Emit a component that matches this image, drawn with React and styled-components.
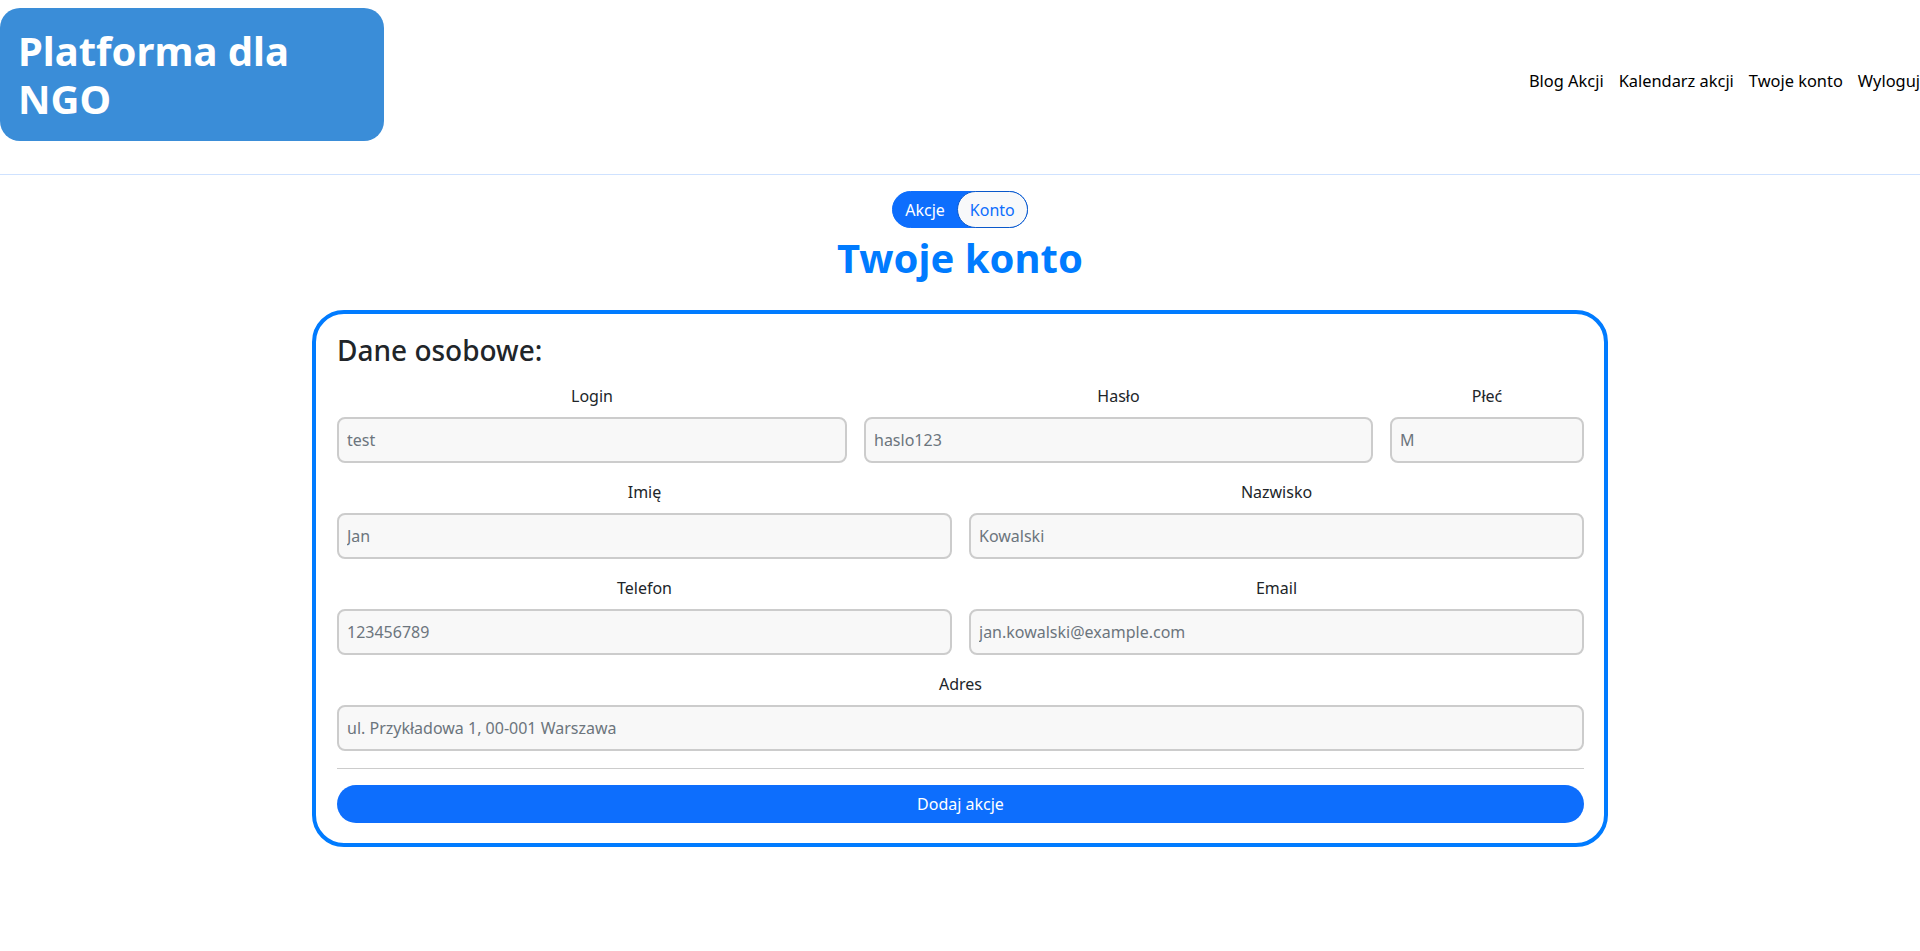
import React from "react";
import styled, { createGlobalStyle } from "styled-components";

const GlobalStyle = createGlobalStyle`
  * { box-sizing: border-box; }
  body {
    margin: 0;
    background: #fff;
    font-family: "Noto Sans", "Open Sans", sans-serif;
    font-size: 16px;
    line-height: 1.5;
    color: #212529;
    overflow-x: hidden;
  }
`;

const rows = [
  {
    cols: "510fr 509fr 194fr",
    fields: [
      { label: "Login", value: "test" },
      { label: "Hasło", value: "haslo123" },
      { label: "Płeć", value: "M" },
    ],
  },
  {
    cols: "1fr 1fr",
    fields: [
      { label: "Imię", value: "Jan" },
      { label: "Nazwisko", value: "Kowalski" },
    ],
  },
  {
    cols: "1fr 1fr",
    fields: [
      { label: "Telefon", value: "123456789" },
      { label: "Email", value: "jan.kowalski@example.com" },
    ],
  },
  {
    cols: "1fr",
    fields: [{ label: "Adres", value: "ul. Przykładowa 1, 00-001 Warszawa" }],
  },
];

const App = () => {
  return (
    <>
      <GlobalStyle />
      <Header>
        <Logo>Platforma dla NGO</Logo>
        <Nav>
          <NavLink href="#">Blog Akcji</NavLink>
          <NavLink href="#">Kalendarz akcji</NavLink>
          <NavLink href="#">Twoje konto</NavLink>
          <NavLink href="#">Wyloguj</NavLink>
        </Nav>
      </Header>
      <Main>
        <Toggle>
          <ToggleButton>Akcje</ToggleButton>
          <ToggleButton $selected>Konto</ToggleButton>
        </Toggle>
        <Title>Twoje konto</Title>
        <Card>
          <CardTitle>Dane osobowe:</CardTitle>
          {rows.map((row, i) => (
            <Row key={i} $cols={row.cols}>
              {row.fields.map((f) => (
                <Field key={f.label}>
                  <Label>{f.label}</Label>
                  <Input placeholder={f.value} />
                </Field>
              ))}
            </Row>
          ))}
          <Divider />
          <SubmitButton>Dodaj akcje</SubmitButton>
        </Card>
      </Main>
    </>
  );
};

const Header = styled.header`
  display: flex;
  align-items: center;
  justify-content: space-between;
  padding: 8px 0 33px;
  border-bottom: 1px solid #cfe2ff;
`;

const Logo = styled.div`
  width: 20%;
  padding: 19px 20px 18px 18px;
  background: #3a8dd8;
  color: #fff;
  border-radius: 20px;
  font-size: 40px;
  font-weight: 700;
  line-height: 48px;
`;

const Nav = styled.nav`
  display: flex;
  gap: 15px;
  padding-top: 13px;
`;

const NavLink = styled.a`
  color: #000;
  text-decoration: none;
  font-size: 16.4px;
`;

const Main = styled.main`
  width: 1296px;
  margin: 0 auto;
  padding-top: 16px;
  display: flex;
  flex-direction: column;
  align-items: center;
`;

const Toggle = styled.div`
  display: flex;
  height: 37px;
  background: #0d6efd;
  border: 1px solid #0d6efd;
  border-radius: 999px;
`;

const ToggleButton = styled.button`
  padding: 0 12px;
  border: ${(p) => (p.$selected ? "1px solid #0a58ca" : "none")};
  border-radius: 999px;
  background: ${(p) => (p.$selected ? "#f8f9fa" : "#0d6efd")};
  color: ${(p) => (p.$selected ? "#0d6efd" : "#fff")};
  font-family: inherit;
  font-size: 16px;
  margin: ${(p) => (p.$selected ? "-1px -1px -1px 0" : "0")};
  height: ${(p) => (p.$selected ? "37px" : "35px")};
`;

const Title = styled.h1`
  margin: 6px 0 28px;
  font-size: 40px;
  line-height: 48px;
  font-weight: 700;
  color: #007bff;
`;

const Card = styled.section`
  align-self: stretch;
  border: 4px solid #007bff;
  border-radius: 32px;
  padding: 20px 20px 20px 21px;
  display: flex;
  flex-direction: column;
`;

const CardTitle = styled.h3`
  margin: 0 0 16px;
  font-size: 28px;
  line-height: 33.6px;
  font-weight: 500;
  color: #212529;
`;

const Row = styled.div`
  display: grid;
  grid-template-columns: ${(p) => p.$cols};
  gap: 17px;
  margin-bottom: 17px;
`;

const Field = styled.div`
  display: flex;
  flex-direction: column;
  min-width: 0;
`;

const Label = styled.label`
  text-align: center;
  font-size: 16px;
  line-height: 24px;
  margin-bottom: 9px;
  color: #212529;
`;

const Input = styled.input`
  width: 100%;
  min-width: 0;
  height: 46px;
  padding: 0 8px;
  border: 2px solid #ccc;
  border-radius: 8px;
  background: #f8f8f8;
  font-family: inherit;
  font-size: 16px;
  color: #212529;
  outline: none;
  &::placeholder {
    color: #6c757d;
  }
`;

const Divider = styled.hr`
  width: 100%;
  margin: 0 0 16px;
  border: 0;
  border-top: 1px solid #ccc;
`;

const SubmitButton = styled.button`
  height: 38px;
  border: 0;
  border-radius: 999px;
  background: #0d6efd;
  color: #fff;
  font-family: inherit;
  font-size: 16px;
`;

export default App;
